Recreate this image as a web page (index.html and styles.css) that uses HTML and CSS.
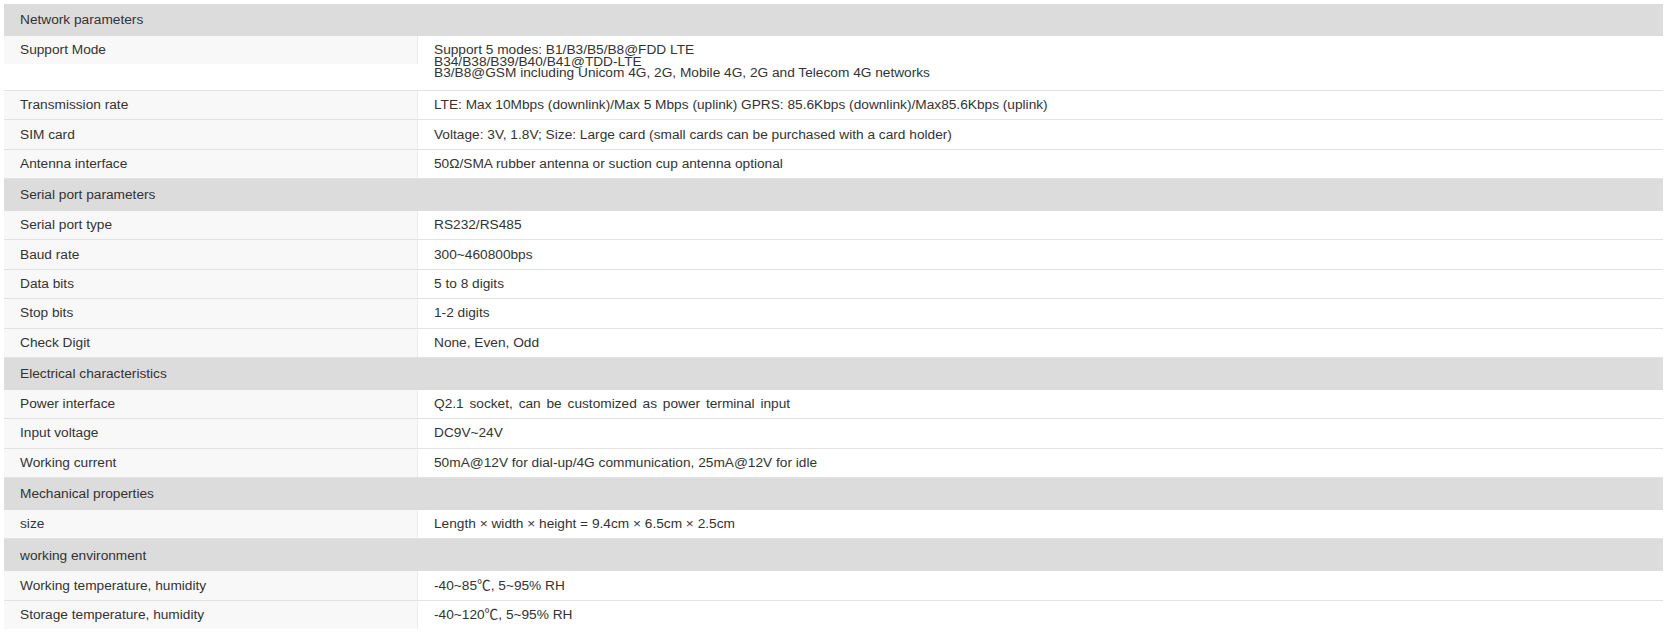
FILE: index.html
```html
<!DOCTYPE html>
<html lang="en">
<head>
<meta charset="utf-8">
<title>Parameters</title>
<link rel="stylesheet" href="styles.css">
</head>
<body>
<div class="spec">
  <div class="group">Network parameters</div>
  <div class="row row-tall">
    <div class="key">Support Mode</div>
    <div class="val val-lines">Support 5 modes: B1/B3/B5/B8@FDD LTE<br>B34/B38/B39/B40/B41@TDD-LTE<br>B3/B8@GSM including Unicom 4G, 2G, Mobile 4G, 2G and Telecom 4G networks</div>
  </div>
  <div class="row"><div class="key">Transmission rate</div><div class="val">LTE: Max 10Mbps (downlink)/Max 5 Mbps (uplink) GPRS: 85.6Kbps (downlink)/Max85.6Kbps (uplink)</div></div>
  <div class="row"><div class="key">SIM card</div><div class="val">Voltage: 3V, 1.8V; Size: Large card (small cards can be purchased with a card holder)</div></div>
  <div class="row"><div class="key">Antenna interface</div><div class="val">50Ω/SMA rubber antenna or suction cup antenna optional</div></div>

  <div class="group">Serial port parameters</div>
  <div class="row"><div class="key">Serial port type</div><div class="val">RS232/RS485</div></div>
  <div class="row"><div class="key">Baud rate</div><div class="val">300~460800bps</div></div>
  <div class="row"><div class="key">Data bits</div><div class="val">5 to 8 digits</div></div>
  <div class="row"><div class="key">Stop bits</div><div class="val">1-2 digits</div></div>
  <div class="row"><div class="key">Check Digit</div><div class="val">None, Even, Odd</div></div>

  <div class="group">Electrical characteristics</div>
  <div class="row"><div class="key">Power interface</div><div class="val val-wide">Q2.1 socket, can be customized as power terminal input</div></div>
  <div class="row"><div class="key">Input voltage</div><div class="val">DC9V~24V</div></div>
  <div class="row"><div class="key">Working current</div><div class="val">50mA@12V for dial-up/4G communication, 25mA@12V for idle</div></div>

  <div class="group">Mechanical properties</div>
  <div class="row"><div class="key">size</div><div class="val">Length × width × height = 9.4cm × 6.5cm × 2.5cm</div></div>

  <div class="group">working environment</div>
  <div class="row"><div class="key">Working temperature, humidity</div><div class="val">-40~85℃, 5~95% RH</div></div>
  <div class="row row-last"><div class="key">Storage temperature, humidity</div><div class="val">-40~120℃, 5~95% RH</div></div>
</div>
</body>
</html>
```

FILE: styles.css
```css
html, body {
  margin: 0;
  padding: 0;
  background: #ffffff;
}

body {
  font-family: "Liberation Sans", Arial, "Noto Sans CJK SC", sans-serif;
  font-size: 13.7px;
  color: #333333;
}

.spec {
  margin: 4px 2px 0 4px;
  display: flex;
  flex-direction: column;
}

.group {
  height: 32px;
  box-sizing: border-box;
  background: #dcdcdc;
  padding: 8.3px 16px 0;
  line-height: 15.5px;
}

.row {
  display: grid;
  grid-template-columns: 414px 1fr;
  height: 29.36px;
  box-sizing: border-box;
  border-bottom: 1px solid #e2e2e2;
}

.row-last {
  border-bottom: none;
  height: 28.36px;
}

.key {
  background: #f8f8f8;
  border-right: 1px solid #ececec;
  padding: 6.2px 16px 0;
  line-height: 15.5px;
  white-space: nowrap;
}

.val {
  padding: 6.2px 16px 0;
  line-height: 15.5px;
  white-space: nowrap;
}

.val-wide {
  word-spacing: 2px;
}

.row-tall {
  height: 55px;
  align-items: start;
}

.row-tall .key {
  height: 28px;
  box-sizing: border-box;
  padding-top: 6px;
}

.val-lines {
  padding-top: 8px;
  line-height: 11.6px;
}
```
